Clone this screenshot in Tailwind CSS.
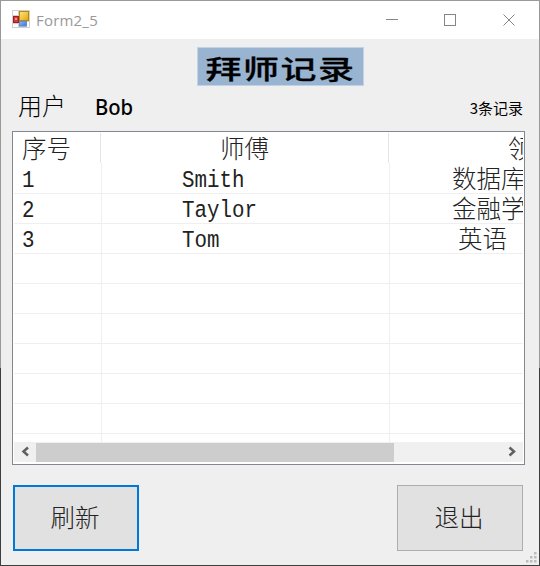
<!DOCTYPE html>
<html lang="zh-CN">
<head>
<meta charset="utf-8">
<title>Form2_5</title>
<script src="https://cdn.jsdelivr.net/npm/@tailwindcss/browser@4"></script>
</head>
<body class="w-[540px] h-[566px] overflow-hidden bg-linear-to-b from-[#999] from-65% to-[#3e3e3e] to-65% p-px font-['Liberation_Sans','Noto_Sans_CJK_SC',sans-serif]">
<main class="relative flex flex-col w-[538px] h-[564px] bg-[#efefef] overflow-hidden">
  <header class="flex h-[38px] shrink-0 items-center bg-white pl-[11px] text-[#999]">
    <svg width="18" height="18" viewBox="0 0 18 18" class="relative -top-px shrink-0">
      <defs>
        <linearGradient id="y" x2="1" y2="1"><stop stop-color="#ffe68a"/><stop offset="1" stop-color="#e5a500"/></linearGradient>
        <linearGradient id="b" x2="1" y2="1"><stop stop-color="#8bb8fa"/><stop offset="1" stop-color="#3672d8"/></linearGradient>
      </defs>
      <rect width="18" height="18" fill="#d2d0cc"/>
      <path d="M1 1h5v4H1zM1 14h5v3H1zM15 12h2v5h-2z" fill="#fff"/>
      <rect x="7.5" y="1.5" width="9" height="9" fill="url(#y)" stroke="#b8860b"/>
      <rect x="1.5" y="6.5" width="5" height="6" fill="#cf3b35" stroke="#a01d20"/>
      <rect x="3" y="8" width="2" height="2" fill="#ee9890"/>
      <rect x="7.5" y="11.5" width="7" height="4.5" fill="url(#b)" stroke="#5b8ee0"/>
    </svg>
    <h1 class="ml-[6px] font-['Open_Sans','Noto_Sans',sans-serif] text-[15px] leading-none tracking-[0.2px]">Form2_5</h1>
    <svg class="ml-auto mr-[24px]" width="129" height="12" viewBox="0 0 129 12" fill="none" stroke="#858585" shape-rendering="crispEdges">
      <path d="M0 5.500h12M58.500 .5h11v11h-11z"/>
      <path d="M117.500 .5l11 11M128.500 .5l-11 11" shape-rendering="auto"/>
    </svg>
  </header>

  <div class="flex h-[54px] shrink-0 pt-[8px] pl-[196px]">
    <div class="flex h-[39px] w-[167px] items-center justify-center border border-[#c3d2e2] bg-[#99b4d1] text-black">
      <span class="inline-block origin-center scale-y-[0.72] font-['Noto_Sans_CJK_SC',sans-serif] text-[36px] font-medium leading-none tracking-[1.5px] whitespace-nowrap [-webkit-text-stroke:0.4px_black]">拜师记录</span>
    </div>
  </div>

  <div class="flex h-[38px] shrink-0 pl-[17px] pr-[16px] leading-none text-black">
    <span class="w-[77px] font-['Noto_Sans_CJK_SC',sans-serif] text-[24px] font-light">用户</span>
    <span class="origin-left scale-x-[0.92] pt-[2px] font-['Noto_Sans',sans-serif] text-[22px] font-medium">Bob</span>
    <span class="ml-auto pt-[7px] font-['Noto_Sans_CJK_SC',sans-serif] text-[15px]">3条记录</span>
  </div>

  <section class="ml-[11px] flex h-[334px] w-[513px] shrink-0 flex-col border border-[#828790] bg-white p-px font-['Liberation_Mono','Noto_Sans_CJK_SC',monospace] text-[20.8px] text-[#222] whitespace-nowrap">
    <div class="h-[309px] overflow-hidden">
      <div class="grid h-[30px] w-[640px] grid-rows-[30px] grid-cols-[87px_288px_265px] text-[24.5px] leading-[38px] font-light">
        <div class="h-full border-r border-[#e3e3e3] pl-[8px]">序号</div>
        <div class="h-full border-r border-[#e3e3e3] text-center">师傅</div>
        <div class="pl-[119px]">领域</div>
      </div>
      <div class="grid w-[640px] auto-rows-[30px] grid-cols-[88px_288px_264px] *:h-[31px] *:border-r *:border-b *:border-[#efefef] leading-[36px]">
        <div class="pl-[8px]"><span class="inline-block origin-center scale-y-[1.18]">1</span></div><div class="pl-[80px]"><span class="inline-block origin-center scale-y-[1.18]">Smith</span></div><div class="pl-[62px] text-[24.5px] leading-[38px] font-light">数据库</div>
        <div class="pl-[8px]"><span class="inline-block origin-center scale-y-[1.18]">2</span></div><div class="pl-[80px]"><span class="inline-block origin-center scale-y-[1.18]">Taylor</span></div><div class="pl-[62px] text-[24.5px] leading-[38px] font-light">金融学</div>
        <div class="pl-[8px]"><span class="inline-block origin-center scale-y-[1.18]">3</span></div><div class="pl-[80px]"><span class="inline-block origin-center scale-y-[1.18]">Tom</span></div><div class="pl-[68px] text-[24.5px] leading-[38px] font-light">英语</div>
        <div></div><div></div><div></div>
        <div></div><div></div><div></div>
        <div></div><div></div><div></div>
        <div></div><div></div><div></div>
        <div></div><div></div><div></div>
        <div></div><div></div><div></div>
        <div></div><div></div><div></div>
      </div>
    </div>
    <div class="flex h-[20px] items-center bg-[#f0f0f0]">
      <svg width="22" height="20" viewBox="0 0 22 20" fill="none" stroke="#606060" stroke-width="2.5"><path d="M14 5.500l-4.500 4 4.500 4"/></svg>
      <div class="h-[19px] w-[358px] bg-[#cdcdcd]"></div>
      <svg class="ml-auto" width="22" height="20" viewBox="0 0 22 20" fill="none" stroke="#606060" stroke-width="2.5"><path d="M8.500 5.500l4.500 4-4.500 4"/></svg>
    </div>
  </section>

  <footer class="flex justify-between pl-[12px] pr-[16px] pt-[20px] font-['Noto_Sans_CJK_SC',sans-serif] text-[24.5px] font-light leading-none text-[#222]">
    <button class="h-[66px] w-[126px] border-2 border-[#0078d7] bg-[#e1e1e1] pr-[2px] pb-px">刷新</button>
    <button class="h-[66px] w-[126px] border border-[#adadad] bg-[#e1e1e1] pr-[2px] pb-px">退出</button>
  </footer>
  <svg class="absolute right-[2px] bottom-[2px]" width="11" height="11" viewBox="0 0 11 11" fill="#bcbcbc"><path d="M8 0h2.500v2.500H8zM4 4h2.500v2.500H4zM8 4h2.500v2.500H8zM0 8h2.500v2.500H0zM4 8h2.500v2.500H4zM8 8h2.500v2.500H8z"/></svg>
</main>
</body>
</html>
